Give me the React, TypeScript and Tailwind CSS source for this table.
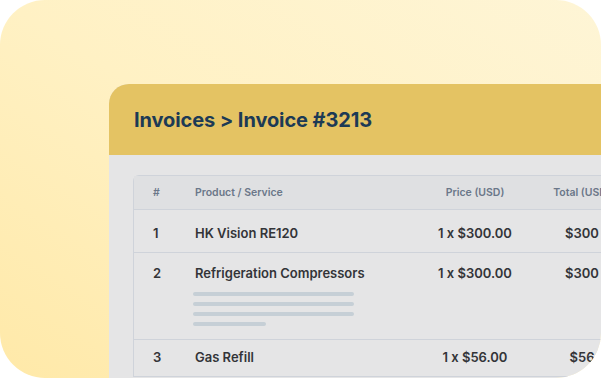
import React from "react";

const rows = [
  { n: "1", name: "HK Vision RE120", price: "1 x $300.00", total: "$300", h: "h-[43px]", pt: "pt-[14px]", lines: false },
  { n: "2", name: "Refrigeration Compressors", price: "1 x $300.00", total: "$300", h: "h-[87px]", pt: "pt-[11px]", lines: true },
  { n: "3", name: "Gas Refill", price: "1 x $56.00", total: "$56", h: "h-[37px]", pt: "pt-[8px]", lines: false },
];

export default function App() {
  return (
    <div className="w-[601px] h-[378px] bg-white" style={{ fontFamily: "Inter, 'Noto Sans', sans-serif" }}>
      <div className="w-[601px] h-[378px] rounded-[45px] overflow-hidden bg-gradient-to-tr from-[#ffe9a8] via-[#fff1c4] to-[#fef5d6] pl-[109px] pt-[84px]">
        <div className="w-[560px] h-[320px] rounded-tl-[20px] overflow-hidden bg-[#e5e5e6] flex flex-col">
          <div className="h-[71px] shrink-0 bg-[#e4c363] flex items-center pl-[25px]">
            <h1 className="text-[20px] font-bold text-[#1c3a55] tracking-[-0.1px]">Invoices &gt; Invoice #3213</h1>
          </div>
          <div className="pl-[24px] pt-[20px]">
            <div className="w-[520px] rounded-tl-[6px] border-l border-t border-[#cfd3da]">
              <div className="grid grid-cols-[61px_220px_120px_94px] h-[34px] items-center bg-[#dfe0e2] border-b border-[#cfd3da] text-[10.5px] font-semibold text-[#6b7789]">
                <div className="pl-[19px]">#</div>
                <div>Product / Service</div>
                <div className="text-center">Price (USD)</div>
                <div className="text-center whitespace-nowrap">Total (USD)</div>
              </div>
              {rows.map((r) => (
                <div key={r.n} className={`grid grid-cols-[61px_220px_120px_94px] ${r.h} border-b border-[#cfd3da] text-[13px] font-semibold text-[#333438]`}>
                  <div className={`pl-[19px] ${r.pt}`}>{r.n}</div>
                  <div className={r.pt}>
                    <div>{r.name}</div>
                    {r.lines && (
                      <div className="flex flex-col gap-[6px] mt-[8px] -ml-[2px]">
                        <div className="h-[4px] w-[161px] rounded-full bg-[#c6cfd6]" />
                        <div className="h-[4px] w-[161px] rounded-full bg-[#c6cfd6]" />
                        <div className="h-[4px] w-[161px] rounded-full bg-[#c6cfd6]" />
                        <div className="h-[4px] w-[73px] rounded-full bg-[#c6cfd6]" />
                      </div>
                    )}
                  </div>
                  <div className={`${r.pt} text-center`}>{r.price}</div>
                  <div className={`${r.pt} text-center`}>{r.total}</div>
                </div>
              ))}
            </div>
          </div>
        </div>
      </div>
    </div>
  );
}
